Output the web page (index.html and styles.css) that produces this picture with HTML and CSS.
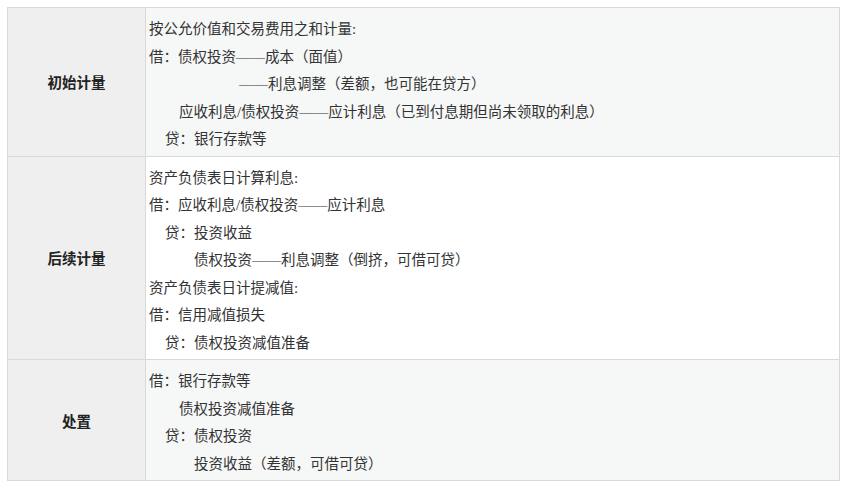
FILE: index.html
```html
<!DOCTYPE html>
<html lang="zh-CN">
<head>
<meta charset="utf-8">
<title>债权投资</title>
<link rel="stylesheet" href="styles.css">
</head>
<body>
<div class="wrap">
<table class="tbl">
  <tr class="odd">
    <th>初始计量</th>
    <td>
      <div class="ln">按公允价值和交易费用之和计量<span class="a">:</span></div>
      <div class="ln">借<span class="c">：</span>债权投资<span class="d">——</span>成本（面值）</div>
      <div class="ln i6"><span class="d">——</span>利息调整（差额，也可能在贷方）</div>
      <div class="ln i2">应收利息<span class="a">/</span>债权投资<span class="d">——</span>应计利息（已到付息期但尚未领取的利息）</div>
      <div class="ln i1">贷<span class="c">：</span>银行存款等</div>
    </td>
  </tr>
  <tr class="even">
    <th>后续计量</th>
    <td>
      <div class="ln">资产负债表日计算利息<span class="a">:</span></div>
      <div class="ln">借<span class="c">：</span>应收利息<span class="a">/</span>债权投资<span class="d">——</span>应计利息</div>
      <div class="ln i1">贷<span class="c">：</span>投资收益</div>
      <div class="ln i3">债权投资<span class="d">——</span>利息调整（倒挤，可借可贷）</div>
      <div class="ln">资产负债表日计提减值<span class="a">:</span></div>
      <div class="ln">借<span class="c">：</span>信用减值损失</div>
      <div class="ln i1">贷<span class="c">：</span>债权投资减值准备</div>
    </td>
  </tr>
  <tr class="odd">
    <th>处置</th>
    <td>
      <div class="ln">借<span class="c">：</span>银行存款等</div>
      <div class="ln i2">债权投资减值准备</div>
      <div class="ln i1">贷<span class="c">：</span>债权投资</div>
      <div class="ln i3">投资收益（差额，可借可贷）</div>
    </td>
  </tr>
</table>
</div>
</body>
</html>
```

FILE: styles.css
```css
html, body {
  margin: 0;
  padding: 0;
  background: #ffffff;
}

.wrap {
  padding: 7px 0 0 7px;
}

.tbl {
  width: 833px;
  border-collapse: collapse;
  font-family: "Noto Sans CJK SC", sans-serif;
  font-size: 14.5px;
  color: #333333;
}

.tbl th,
.tbl td {
  border: 1px solid #d9d9d9;
  padding: 6px 4px 4px 3px;
  vertical-align: middle;
}

.tbl th {
  width: 129px;
  background: #efefef;
  font-weight: 700;
  color: #222222;
  text-align: center;
  padding: 5px 4px;
}

.odd td {
  background: #f6f7f7;
}

.even td {
  background: #ffffff;
}

.ln {
  line-height: 27.5px;
  white-space: nowrap;
}

.c {
  font-family: "Noto Sans CJK TC", sans-serif;
}

.a {
  font-family: "Liberation Serif", serif;
  font-size: 15px;
  line-height: 1;
}

.d {
  font-family: "Liberation Serif", serif;
  font-size: 14.5px;
  line-height: 1;
}

.i1 { padding-left: 16px; }
.i2 { padding-left: 30px; }
.i3 { padding-left: 45px; }
.i6 { padding-left: 90px; }
```
